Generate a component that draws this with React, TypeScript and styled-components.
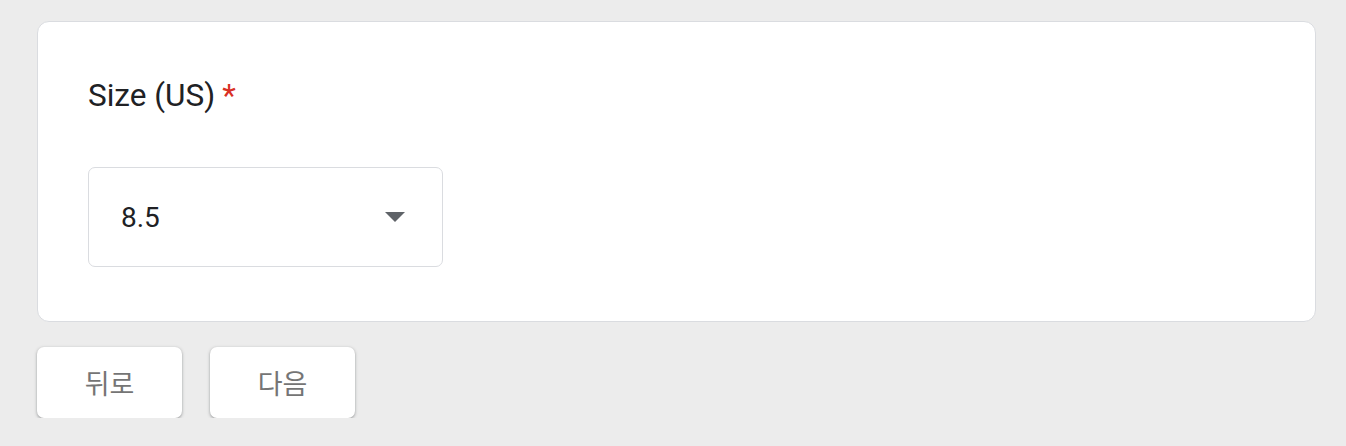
import React from "react";
import styled, { createGlobalStyle } from "styled-components";

const GlobalStyle = createGlobalStyle`
  body {
    margin: 0;
    background: #ececec;
    font-family: Roboto, "Noto Sans CJK KR", Arial, sans-serif;
  }
`;

const Page = styled.div`
  padding: 21px 30px 0 37px;
  display: flex;
  flex-direction: column;
  gap: 25px;
`;

const Card = styled.section`
  box-sizing: border-box;
  width: 1279px;
  height: 301px;
  background: #fff;
  border: 1px solid #dadce0;
  border-radius: 12px;
  padding: 56px 50px 0 50px;
  display: flex;
  flex-direction: column;
  align-items: flex-start;
  gap: 53px;
`;

const Label = styled.div`
  font-family: Roboto, Arial, sans-serif;
  font-size: 31.5px;
  line-height: 36px;
  color: #202124;
`;

const Required = styled.span`
  color: #d93025;
  margin-left: 7px;
`;

const Select = styled.div`
  box-sizing: border-box;
  width: 355px;
  height: 100px;
  border: 1px solid #dadce0;
  border-radius: 7px;
  display: flex;
  align-items: center;
  justify-content: space-between;
  padding: 0 37px 0 32px;
  font-size: 28px;
  color: #202124;
`;

const Arrow = styled.span`
  width: 0;
  height: 0;
  border-left: 10px solid transparent;
  border-right: 10px solid transparent;
  border-top: 10px solid #5f6368;
`;

const Actions = styled.div`
  display: flex;
  gap: 28px;
`;

const Button = styled.button`
  width: 145px;
  height: 71px;
  border: none;
  border-radius: 7px;
  background: #fff;
  box-shadow: 0 1px 2px rgba(60, 64, 67, 0.3), 0 1px 3px 1px rgba(60, 64, 67, 0.15);
  font-family: "Noto Sans CJK KR", Roboto, sans-serif;
  font-size: 27px;
  color: #757575;
  cursor: pointer;
`;

export default function App() {
  return (
    <>
      <GlobalStyle />
      <Page>
        <Card>
          <Label>
            Size (US)<Required>*</Required>
          </Label>
          <Select>
            <span>8.5</span>
            <Arrow />
          </Select>
        </Card>
        <Actions>
          <Button>뒤로</Button>
          <Button>다음</Button>
        </Actions>
      </Page>
    </>
  );
}
